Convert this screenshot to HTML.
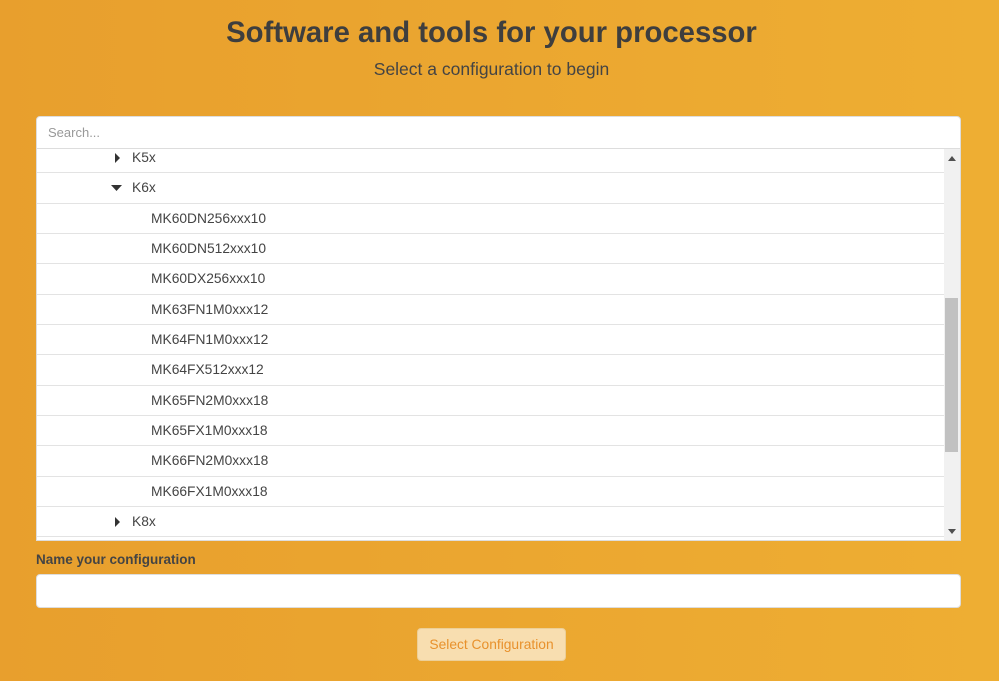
<!DOCTYPE html>
<html><head><style>
*{box-sizing:border-box;margin:0;padding:0}
body{width:999px;height:681px;overflow:hidden;background:linear-gradient(90deg,#e89f2d,#eeae33);font-family:"Liberation Sans",sans-serif;color:#3d3d3d;position:relative}
h1{position:absolute;top:16px;left:0;width:983px;text-align:center;font-size:29.3px;font-weight:bold;color:#3e3e3e}
.sub{position:absolute;top:59px;left:0;width:983px;text-align:center;font-size:17.5px;color:#444}
.search{position:absolute;left:36px;top:116px;width:925px;height:33px;background:#fff;border:1px solid #ddd;border-radius:4px 4px 0 0;font-size:13px;color:#999;padding:8px 11px}
.list{position:absolute;left:36px;top:149px;width:925px;height:392px;background:#fff;border:1px solid #ddd;border-top:none;overflow:hidden}
.rows{position:absolute;left:0;top:-6px;width:907px}
.row{height:30.35px;border-bottom:1px solid #e3e3e3;font-size:13.8px;color:#444;line-height:30px;position:relative}
.l1{padding-left:95px}
.l2{padding-left:114px}
.tri{position:absolute;left:77px;top:0}
.sb{position:absolute;right:0;top:0;width:16px;height:392px;background:#f1f1f1}
.thumb{position:absolute;left:1px;top:149px;width:13px;height:154px;background:#c1c1c1}
.lab{position:absolute;left:36px;top:552px;font-size:13.5px;font-weight:bold;color:#444}
.inp{position:absolute;left:36px;top:574px;width:925px;height:34px;background:#fff;border:1px solid #ddd;border-radius:4px}
.btn{position:absolute;left:417px;top:628px;width:149px;height:33px;background:#f8deb0;border:1px solid #eccf98;border-radius:4px;color:#e8912c;font-size:13.8px;text-align:center;line-height:31px}
</style></head><body>
<h1>Software and tools for your processor</h1>
<div class="sub">Select a configuration to begin</div>
<div class="search">Search...</div>
<div class="list">
<div class="rows">
<div class="row l1"><svg class="tri" width="8" height="30" viewBox="0 0 8 30"><path d="M1 10 L6 15 L1 20Z" fill="#333"/></svg>K5x</div>
<div class="row l1"><svg class="tri" style="left:74px" width="12" height="30" viewBox="0 0 12 30"><path d="M0 12 L11 12 L5.5 18Z" fill="#333"/></svg>K6x</div>
<div class="row l2">MK60DN256xxx10</div>
<div class="row l2">MK60DN512xxx10</div>
<div class="row l2">MK60DX256xxx10</div>
<div class="row l2">MK63FN1M0xxx12</div>
<div class="row l2">MK64FN1M0xxx12</div>
<div class="row l2">MK64FX512xxx12</div>
<div class="row l2">MK65FN2M0xxx18</div>
<div class="row l2">MK65FX1M0xxx18</div>
<div class="row l2">MK66FN2M0xxx18</div>
<div class="row l2">MK66FX1M0xxx18</div>
<div class="row l1"><svg class="tri" width="8" height="30" viewBox="0 0 8 30"><path d="M1 10 L6 15 L1 20Z" fill="#333"/></svg>K8x</div>
<div class="row l1"></div>
</div>
<div class="sb"><svg width="16" height="16" style="position:absolute;top:2px;left:0"><path d="M4 10 L12 10 L8 5Z" fill="#505050"/></svg><div class="thumb"></div><svg width="16" height="16" style="position:absolute;bottom:2px;left:0"><path d="M4 6 L12 6 L8 11Z" fill="#505050"/></svg></div>
</div>
<div class="lab">Name your configuration</div>
<div class="inp"></div>
<div class="btn">Select Configuration</div>
</body></html>
